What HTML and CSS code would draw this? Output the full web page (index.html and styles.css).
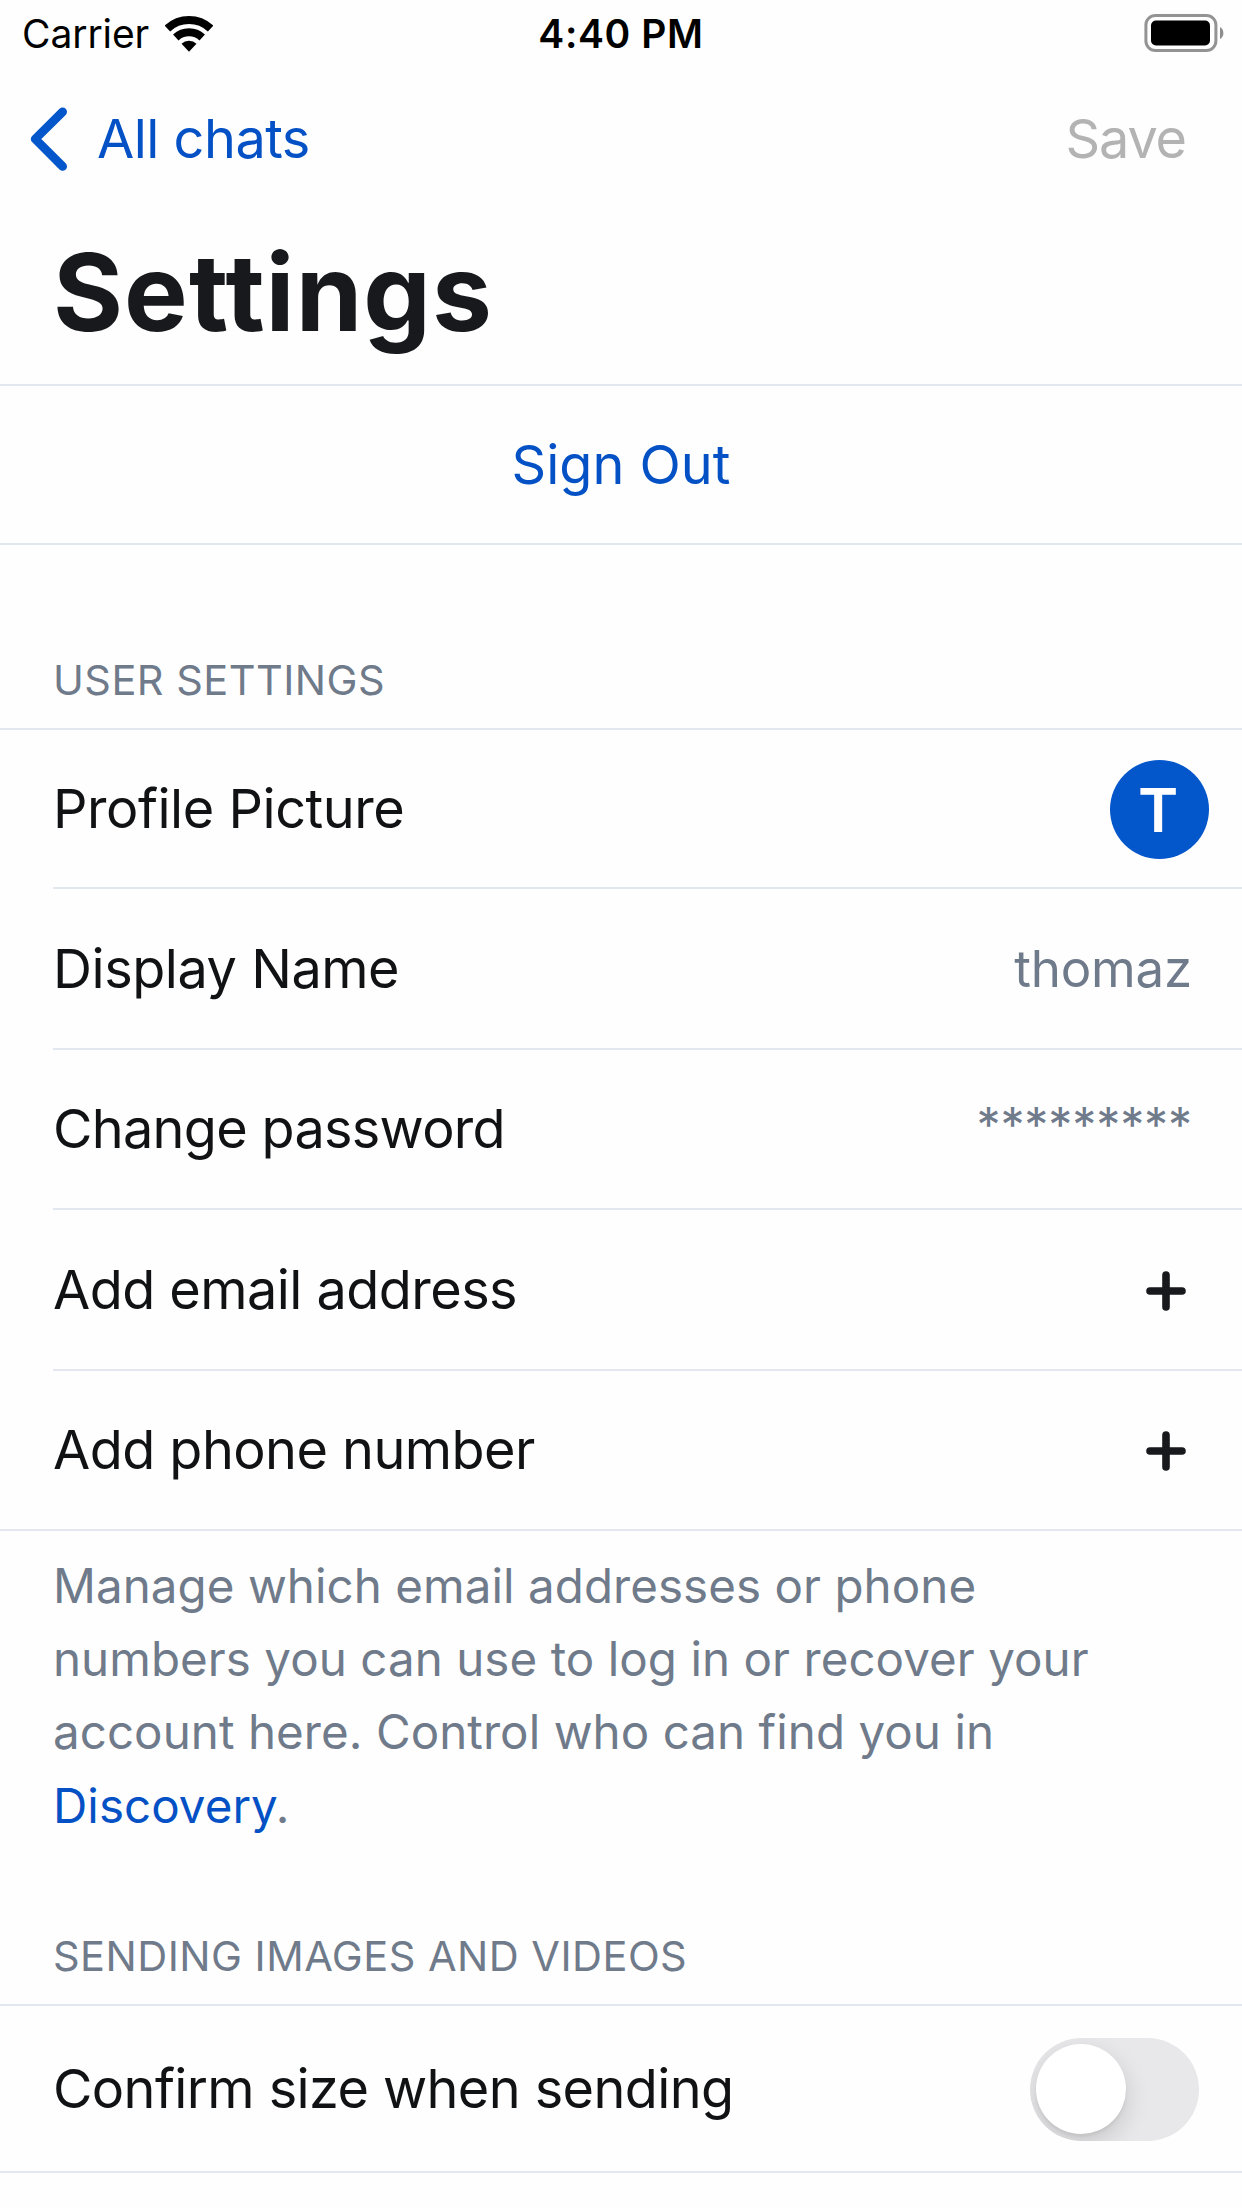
FILE: index.html
```
<!DOCTYPE html>
<html lang="en">
<head>
<meta charset="utf-8">
<title>Settings</title>
<link rel="stylesheet" href="styles.css">
</head>
<body>
<div class="screen">
  <div class="status">
    <div class="status-left">
      <span class="carrier">Carrier</span>
      <svg class="wifi" viewBox="0 0 48 36" width="48" height="36">
        <g fill="none" stroke="#000" stroke-width="8">
          <path d="M2.4 12.5A31.7 31.7 0 0 1 45.6 12.5"/>
          <path d="M10.8 21.5A19.4 19.4 0 0 1 37.2 21.5"/>
        </g>
        <path d="M24 35.7L16.5 27.7A11 11 0 0 1 31.5 27.7Z"/>
      </svg>
    </div>
    <span class="clock">4:40 PM</span>
    <svg class="battery" viewBox="0 0 80 38" width="80" height="38">
      <rect x="1.9" y="1.5" width="70" height="35" rx="9.5" fill="none" stroke="#939393" stroke-width="3"/>
      <rect x="7" y="6.5" width="59" height="25" rx="5"/>
      <path d="M76 13q3.4 2 3.4 6t-3.4 6z" fill="#8e8e8e"/>
    </svg>
  </div>

  <nav class="nav">
    <a class="back">
      <svg viewBox="0 0 40 66" width="40" height="66" fill="none" stroke="#0457cb" stroke-width="8.8" stroke-linecap="round" stroke-linejoin="round"><path d="M34.6 5.8L7.2 33L34.6 60.4"/></svg>
      <span>All chats</span>
    </a>
    <span class="save">Save</span>
  </nav>

  <h1 class="title">Settings</h1>
  <div class="signout"><a>Sign Out</a></div>

  <h2 class="section">USER SETTINGS</h2>
  <ul class="list">
    <li class="row row-first"><span>Profile Picture</span><span class="avatar">T</span></li>
    <li class="row"><span>Display Name</span><span class="value">thomaz</span></li>
    <li class="row"><span class="t-pass">Change password</span><span class="stars">*********</span></li>
    <li class="row"><span class="t-add">Add email address</span><svg class="plus" viewBox="0 0 40 40" width="40" height="40"><path d="M20 4V36M4 20H36"/></svg></li>
    <li class="row row-last"><span class="t-add">Add phone number</span><svg class="plus" viewBox="0 0 40 40" width="40" height="40"><path d="M20 4V36M4 20H36"/></svg></li>
  </ul>
  <p class="note">Manage which email addresses or phone<br>numbers you can use to log in or recover your<br>account here. Control who can find you in<br><a>Discovery</a>.</p>

  <h2 class="section section-media">SENDING IMAGES AND VIDEOS</h2>
  <div class="row row-switch"><span>Confirm size when sending</span><span class="switch"><span class="knob"></span></span></div>
  <p class="note note-media">When this is on, you’ll be asked to confirm what</p>
</div>
</body>
</html>
```
FILE: styles.css
```
* { box-sizing: border-box; }
body { margin: 0; background: #fefefe; color: #101214; font: 400 54px/66px Inter, "Liberation Sans", sans-serif; }
h1, h2, p, ul { margin: 0; padding: 0; font-weight: 400; }
svg { display: block; flex: none; }
a { color: #0451c6; }
.screen { width: 1242px; height: 2208px; overflow: hidden; white-space: nowrap; }

.status { display: grid; grid-template-columns: 1fr auto 1fr; align-items: center; height: 67px; padding: 0 18px 0 22px; font-size: 39px; line-height: 48px; color: #000; }
.status-left { display: flex; align-items: center; gap: 16px; }
.carrier { letter-spacing: -0.1px; }
.clock { margin-right: 4px; font-weight: 600; letter-spacing: 0.6px; }
.battery { justify-self: end; position: relative; top: -1px; }

.nav { display: flex; align-items: center; justify-content: space-between; height: 143px; padding: 1px 56px 0 28px; }
.back { display: flex; align-items: center; gap: 29px; letter-spacing: -0.5px; }
.save { color: #b3b3b3; letter-spacing: -1.1px; }

.title { height: 176px; padding: 17px 53px 0; font-weight: 700; font-size: 107px; line-height: 130px; letter-spacing: 1.05px; color: #17191c; border-bottom: 2px solid #e3e8f0; }
.signout { display: flex; align-items: center; justify-content: center; height: 159px; padding-top: 1px; border-bottom: 2px solid #e3e8f0; }

.section { padding: 110px 53px 23px; font-size: 41.5px; line-height: 50px; letter-spacing: 0.47px; color: #6f7a8a; border-bottom: 2px solid #e3e8f0; }
.section-media { padding-top: 89.4px; }

.list { list-style: none; }
.row { display: flex; align-items: center; justify-content: space-between; height: 160.5px; margin-left: 53px; padding-top: 1px; border-bottom: 2px solid #e3e8f0; letter-spacing: -0.45px; }
.row-first { height: 159px; }
.row-last { margin-left: 0; padding-left: 53px; }
.t-pass { letter-spacing: -0.7px; }
.t-add { letter-spacing: -0.55px; }
.value { padding-right: 50px; padding-top: 1px; font-size: 51px; letter-spacing: -0.2px; color: #6f7a8a; }
.stars { padding-right: 50px; padding-bottom: 9px; font-size: 48px; letter-spacing: -0.1px; color: #6f7a8a; }
.avatar { display: flex; align-items: center; justify-content: center; width: 99px; height: 99px; margin-right: 33px; padding: 2px 3px 0 0; border-radius: 50%; background: #0457cb; color: #fff; font-weight: 600; font-size: 61px; }
.plus { margin-right: 56px; margin-top: 2px; fill: none; stroke: #17191c; stroke-width: 7.6; stroke-linecap: round; }

.note { padding: 17.5px 53px 0; font-size: 47.5px; line-height: 73.4px; letter-spacing: 0.06px; color: #6f7a8a; }
.note-media { padding-top: 18px; }

.section-media { padding-top: 88.9px; }
.row-switch { height: 167px; margin-left: 0; padding-left: 53px; letter-spacing: -0.6px; }
.switch { display: flex; align-items: center; width: 169px; height: 103px; margin-right: 43px; padding-left: 6px; border-radius: 52px; background: #e8e8ea; overflow: hidden; }
.knob { width: 90px; height: 90px; border-radius: 50%; background: #fff; box-shadow: 0 9px 24px rgba(0, 0, 0, 0.15), 0 3px 3px rgba(0, 0, 0, 0.05); }
```
